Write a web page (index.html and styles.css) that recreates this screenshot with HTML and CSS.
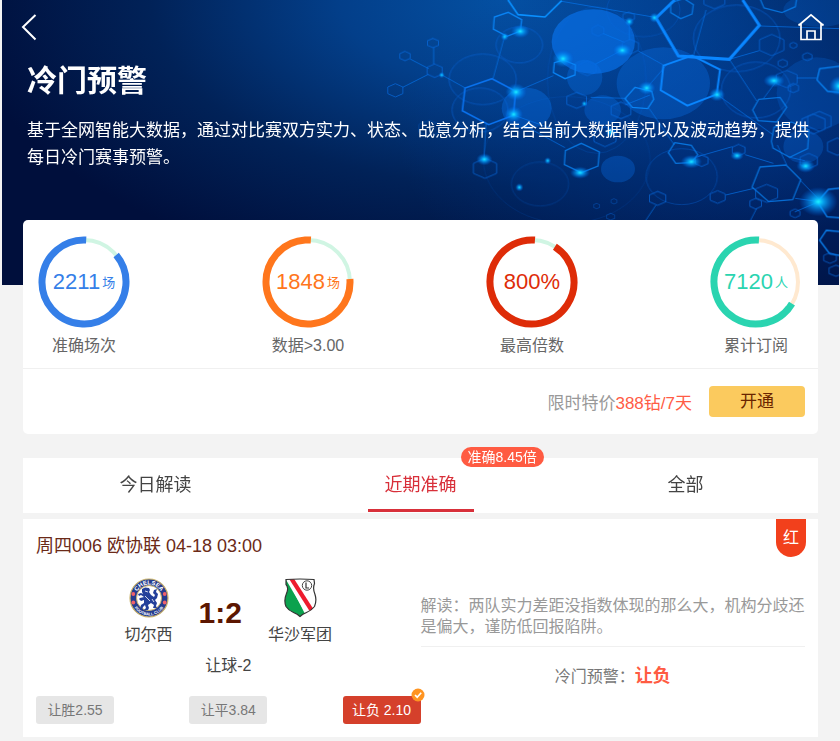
FILE: index.html
```
<!DOCTYPE html>
<html lang="zh-CN">
<head>
    <meta charset="UTF-8">
    <meta name="viewport" content="width=device-width, initial-scale=1.0">
    <title>冷门预警</title>
    <link rel="stylesheet" href="styles.css">
</head>
<body>

    <header class="hero">
        <!-- 背景:分子结构 -->
        <svg class="hero-bg" viewBox="0 0 1377 855" aria-hidden="true">
            <defs>
                <polygon id="hex" points="0,-1 .87,-.5 .87,.5 0,1 -.87,.5 -.87,-.5" vector-effect="non-scaling-stroke"/>
                <radialGradient id="glow">
                    <stop offset="0" stop-color="#1ff4ff"/>
                    <stop offset=".25" stop-color="#08b4ff" stop-opacity=".9"/>
                    <stop offset="1" stop-color="#0070ff" stop-opacity="0"/>
                </radialGradient>
            </defs>

            <!-- 光斑 -->
            <g fill="#0a78f5">
                <ellipse cx="640" cy="125" rx="125" ry="97" opacity=".6"/>
                <circle cx="614" cy="232" r="53" opacity=".3"/>
                <ellipse cx="850" cy="250" rx="140" ry="108" opacity=".3"/>
                <ellipse cx="440" cy="325" rx="75" ry="62" opacity=".35"/>
                <ellipse cx="668" cy="330" rx="55" ry="44" opacity=".3"/>
                <ellipse cx="714" cy="507" rx="51" ry="40" opacity=".3"/>
                <ellipse cx="1310" cy="280" rx="120" ry="108" opacity=".2"/>
                <ellipse cx="1320" cy="30" rx="110" ry="50" opacity=".2"/>
                <ellipse cx="1270" cy="440" rx="60" ry="50" opacity=".25"/>
            </g>
            <g fill="#0058c8" fill-opacity=".12" stroke="#0a6ae0" stroke-width="3" opacity=".55">
                <ellipse cx="308" cy="238" rx="101" ry="76"/>
                <ellipse cx="418" cy="135" rx="70" ry="54"/>
                <ellipse cx="300" cy="330" rx="84" ry="66"/>
                <ellipse cx="1070" cy="115" rx="130" ry="100"/>
                <ellipse cx="1128" cy="270" rx="104" ry="84"/>
                <ellipse cx="905" cy="530" rx="107" ry="84" opacity=".7"/>
                <ellipse cx="480" cy="552" rx="86" ry="66" opacity=".5"/>
                <ellipse cx="650" cy="240" rx="148" ry="220" opacity=".4"/>
                <ellipse cx="560" cy="480" rx="250" ry="190" opacity=".3"/>
                <ellipse cx="790" cy="30" rx="110" ry="80" opacity=".6"/>
            </g>

            <!-- 连线 -->
            <g fill="none" stroke="#0878f0" stroke-width="3" opacity=".65">
                <path d="M90 177l56 29M161 142v50M68 262l77-39M184 224l70 39M374 108l-35 128M408 275l112-48M318 370l-6 106M430 375l125 68"/>
                <path d="M545 4l280 48M748 65v55M668 100l65 27M645 193l80-42M775 153l75 42M800 264l60-70M735 315l75-30M632 292l108 3M400 345l155 55"/>
                <path d="M978 30l-38 138M1140 78l240 8M1048 178l90-26M1048 178l82 125M1010 283l170 122M1250 234h60M1190 242l-40 54M807 325l76 110M952 470l105-30"/>
                <path d="M1230 472l44 10M1220 495l-28-60M1260 540l58 60M1245 595l75 10M1037 585l85-20M828 615l-30 45M1130 625l-18 35M1314 606l-70 30M1180 490l-85-26"/>
            </g>
            <g fill="none" stroke="#0a84f5" stroke-width="4">
                <path d="M336 236l71 38-7 72-74 28-79-42 8-68z" stroke="#0a72ee" stroke-width="5"/>
                <path d="M384 0l30 44 81 7 50-49" stroke="#0a90ff" stroke-width="5"/>
                <path d="M884 0l-56 54 67 114 153 10 90-102L1088 0" stroke="#0a86ff" stroke-width="9"/>
                <path d="M936 167l84 42-10 74-88 34-80-46 8-74z" stroke="#0a86ff" stroke-width="6"/>
                <path d="M385 37l40 22-4 34-40 16-41-22 3-36z"/>
                <path d="M550 180l36 15-1 30-30 11-35-18 3-30zM765 262l50 12 6 24-18 28-46-4-22-26z"/>
                <path d="M604 430l54 26-4 42-50 20-51-24 3-42zM884 428l50 8 19 28-20 24-46 2-22-32z" opacity=".8"/>
                <path d="M1136 298l64-6 20 30-30 44-56-4-16-32zM1174 424l8-42 52-16 53 24-4 56-54 26-50-28zM1218 495l44 44-24 60-72 6-50-44 24-60z" opacity=".75"/>
                <path d="M1385 198l-66 8-8 34 32 34 42 4M1385 564l-40 4-32 38 28 44 44 4M1385 695l-46-4-20 30 30 40 36 6"/>
                <path d="M872 8l40-12 28 18-4 28-34 14-30-18zM1140 -4l12 28 54 14 40-18 4-24" opacity=".75"/>
            </g>
            <g fill="none" stroke="#0a6ce0" opacity=".7">
                <use href="#hex" transform="translate(75 168) scale(18 14)"/>
                <use href="#hex" transform="translate(159 129) scale(19 14)"/>
                <use href="#hex" transform="translate(164 212) scale(26 20)"/>
                <use href="#hex" transform="translate(46 271) scale(26 20)"/>
                <use href="#hex" transform="translate(654 92) scale(20 17)"/>
                <use href="#hex" transform="translate(622 205) scale(30 22)"/>
                <use href="#hex" transform="translate(590 301) scale(34 24)"/>
                <use href="#hex" transform="translate(751 140) scale(28 22)"/>
                <use href="#hex" transform="translate(746 50) scale(20 14)"/>
                <use href="#hex" transform="translate(723 331) scale(34 25)"/>
                <use href="#hex" transform="translate(675 410) scale(38 30)"/>
                <use href="#hex" transform="translate(315 505) scale(40 30)"/>
                <use href="#hex" transform="translate(148 385) scale(36 24)" opacity=".5"/>
                <use href="#hex" transform="translate(1175 135) scale(42 32)"/>
                <use href="#hex" transform="translate(1220 237) scale(36 26)"/>
                <use href="#hex" transform="translate(1003 0) scale(36 26)"/>
                <use href="#hex" transform="translate(965 482) scale(22 17)"/>
                <use href="#hex" transform="translate(1076 450) scale(22 17)"/>
                <use href="#hex" transform="translate(833 595) scale(28 21)"/>
                <use href="#hex" transform="translate(1013 591) scale(26 19)"/>
                <use href="#hex" transform="translate(1127 611) scale(20 16)"/>
                <use href="#hex" transform="translate(1160 580) scale(38 27)"/>
                <use href="#hex" transform="translate(1286 483) scale(30 23)"/>
                <use href="#hex" transform="translate(1318 364) scale(40 30)"/>
                <use href="#hex" transform="translate(1300 372) scale(40 30)"/>
                <use href="#hex" transform="translate(1240 264) scale(18 14)"/>
                <use href="#hex" transform="translate(1208 190) scale(16 12)"/>
                <use href="#hex" transform="translate(1282 170) scale(16 12)"/>
                <use href="#hex" transform="translate(1240 136) scale(12 9)"/>
                <use href="#hex" transform="translate(1245 640) scale(17 13)"/>
                <use href="#hex" transform="translate(1372 440) scale(34 26)"/>
                <use href="#hex" transform="translate(1350 774) scale(22 16)"/>
                <use href="#hex" transform="translate(1368 812) scale(24 17)"/>
                <use href="#hex" transform="translate(692 650) scale(14 10)" opacity=".5"/>
                <use href="#hex" transform="translate(702 604) scale(10 8)" opacity=".5"/>
                <use href="#hex" transform="translate(650 618) scale(10 8)" opacity=".5"/>
            </g>

            <!-- 发光点 -->
            <g fill="url(#glow)">
                <ellipse cx="421" cy="94" rx="28" ry="20"/>
                <circle cx="374" cy="110" r="12"/>
                <ellipse cx="408" cy="276" rx="32" ry="26"/>
                <ellipse cx="401" cy="343" rx="28" ry="24"/>
                <ellipse cx="549" cy="176" rx="32" ry="26"/>
                <ellipse cx="727" cy="151" rx="28" ry="20"/>
                <circle cx="748" cy="65" r="14"/>
                <circle cx="823" cy="53" r="15"/>
                <ellipse cx="800" cy="264" rx="26" ry="20"/>
                <ellipse cx="1011" cy="284" rx="24" ry="20"/>
                <ellipse cx="1182" cy="242" rx="32" ry="20"/>
                <circle cx="1377" cy="258" r="30"/>
                <ellipse cx="934" cy="485" rx="32" ry="20"/>
                <ellipse cx="1071" cy="467" rx="20" ry="14"/>
                <ellipse cx="1277" cy="498" rx="28" ry="20"/>
                <ellipse cx="1315" cy="605" rx="58" ry="44"/>
                <ellipse cx="600" cy="518" rx="30" ry="18"/>
                <ellipse cx="313" cy="478" rx="24" ry="18"/>
                <circle cx="692" cy="396" r="16"/>
                <circle cx="185" cy="225" r="9"/>
                <circle cx="613" cy="311" r="9"/>
                <circle cx="503" cy="482" r="10"/>
                <circle cx="418" cy="562" r="12"/>
            </g>
        </svg>

        <nav class="hero-nav">
            <a href="#" aria-label="返回">
                <svg width="16" height="28" viewBox="0 0 16 28" fill="none" stroke="#fff" stroke-width="2">
                    <path d="M14.500 2L2 14l12.500 12.500"/>
                </svg>
            </a>
            <a href="#" aria-label="首页">
                <svg width="28" height="28" viewBox="0 0 28 28" fill="none" stroke="#fff" stroke-width="1.700">
                    <path d="M1.500 12.500L14 1.800l12.500 10.700M4 11.500H1.500M24 11.500h2.500M4 10.500V26.500h20V10.500M10 26V18h8v8"/>
                </svg>
            </a>
        </nav>
        <div class="hero-text">
            <h1>冷门预警</h1>
            <p>基于全网智能大数据，通过对比赛双方实力、状态、战意分析，结合当前大数据情况以及波动趋势，提供每日冷门赛事预警。</p>
        </div>
    </header>

    <main class="content">
        <section class="summary">
            <ul class="stats">
                <li class="stat blue">
                    <div class="ring">
                        <svg viewBox="0 0 92 92" aria-hidden="true">
                            <circle class="track" cx="46" cy="46" r="42"/>
                            <circle class="bar" cx="46" cy="46" r="42" pathLength="360" stroke-dasharray="313 360" transform="rotate(-40 46 46)"/>
                        </svg>
                        <span class="num">2211<small>场</small></span>
                    </div>
                    <span class="name">准确场次</span>
                </li>
                <li class="stat orange">
                    <div class="ring">
                        <svg viewBox="0 0 92 92" aria-hidden="true">
                            <circle class="track" cx="46" cy="46" r="42"/>
                            <circle class="bar" cx="46" cy="46" r="42" pathLength="360" stroke-dasharray="278 360" transform="rotate(-4 46 46)"/>
                        </svg>
                        <span class="num">1848<small>场</small></span>
                    </div>
                    <span class="name">数据&gt;3.00</span>
                </li>
                <li class="stat red">
                    <div class="ring">
                        <svg viewBox="0 0 92 92" aria-hidden="true">
                            <circle class="track" cx="46" cy="46" r="42"/>
                            <circle class="bar" cx="46" cy="46" r="42" pathLength="360" stroke-dasharray="331 360" transform="rotate(-57 46 46)"/>
                        </svg>
                        <span class="num">800%</span>
                    </div>
                    <span class="name">最高倍数</span>
                </li>
                <li class="stat green">
                    <div class="ring">
                        <svg viewBox="0 0 92 92" aria-hidden="true">
                            <circle class="track" cx="46" cy="46" r="42"/>
                            <circle class="bar" cx="46" cy="46" r="42" pathLength="360" stroke-dasharray="243 360" transform="rotate(31 46 46)"/>
                        </svg>
                        <span class="num">7120<small>人</small></span>
                    </div>
                    <span class="name">累计订阅</span>
                </li>
            </ul>
            <div class="buy">
                <p>限时特价<em>388钻/7天</em></p>
                <button type="button">开通</button>
            </div>
        </section>

        <nav class="tabs">
            <a href="#">今日解读</a>
            <a href="#" class="active">近期准确<span class="tip">准确8.45倍</span></a>
            <a href="#">全部</a>
        </nav>

        <article class="match">
            <span class="flag">红</span>
            <h2>周四006 欧协联 04-18 03:00</h2>
            <div class="match-body">
                <div class="game">
                    <div class="teams">
                        <div class="team">
                            <svg width="40" height="40" viewBox="0 0 40 40" aria-hidden="true">
                                <defs>
                                    <path id="arc-top" d="M6.500 20a13.500 13.500 0 0 1 27 0"/>
                                    <path id="arc-bottom" d="M2.500 20a17.500 17.500 0 0 0 35 0"/>
                                </defs>
                                <circle cx="20" cy="20" r="19" fill="#253c8e" stroke="#c9b26a" stroke-width="1.200"/>
                                <circle cx="20" cy="20" r="12.500" fill="#fff" stroke="#c9b26a"/>
                                <text class="crest-text"><textPath href="#arc-top" startOffset="50%">CHELSEA</textPath></text>
                                <text class="crest-text small"><textPath href="#arc-bottom" startOffset="50%">FOOTBALL CLUB</textPath></text>
                                <g fill="#f0606a">
                                    <circle cx="4.300" cy="16" r="1.900"/>
                                    <circle cx="4.300" cy="24.500" r="1.900"/>
                                    <circle cx="35.700" cy="16" r="1.900"/>
                                    <circle cx="35.700" cy="24.500" r="1.900"/>
                                </g>
                                <path fill="#24409a" d="M13 11l3-1.500 4 .5 1 2-1 2 2 3 3 2 1-2-2-2 1-3 3-1-1 3 2 2-1 4-2 2 2 3-1 3 1 2h-4l1-3-3-2-3 2 1 3-1 2h-4l2-2-1-3-2 2-1 3-2-1 1-4 3-2v-3l-3 1-2-2 1-1 4-1-3-2-2 1-1-2 3-1 2 1-1-2z"/>
                                <path stroke="#fff" stroke-width=".8" fill="none" d="M16 13l3 1M16 18l5 5M23 21l2 3"/>
                            </svg>
                            <span>切尔西</span>
                        </div>
                        <strong class="score">1:2</strong>
                        <div class="team">
                            <svg width="40" height="40" viewBox="0 0 40 40" aria-hidden="true">
                                <clipPath id="shield">
                                    <path d="M6 1.500q14-1 28 0l.5 4q-2 5 .5 11 2 6-.5 12-3 4-8 6-4 1.500-6.500 4-2.500-2.500-6.500-4-5-2-7.500-6-2.500-6 .5-13 2.500-6-.5-9z"/>
                                </clipPath>
                                <g clip-path="url(#shield)">
                                    <rect width="40" height="40" fill="#fff"/>
                                    <path d="M0 0h7l20 40H0z" fill="#0ba24e"/>
                                    <path d="M5 0h4l22 36h-5z" fill="#fff"/>
                                    <path d="M8.500 0h5L34 32l-3.500 2.500z" fill="#ee1c2e"/>
                                </g>
                                <path d="M6 1.500q14-1 28 0l.5 4q-2 5 .5 11 2 6-.5 12-3 4-8 6-4 1.500-6.500 4-2.500-2.500-6.500-4-5-2-7.500-6-2.500-6 .5-13 2.500-6-.5-9z" fill="none" stroke="#333" stroke-width="1.200"/>
                                <circle cx="27" cy="7.500" r="4.700" fill="#fff" stroke="#444"/>
                                <path d="M26 4.500v5.500h3" fill="none" stroke="#333" stroke-width="1.200"/>
                            </svg>
                            <span>华沙军团</span>
                        </div>
                    </div>
                    <p class="handicap">让球-2</p>
                    <div class="odds">
                        <span>让胜2.55</span>
                        <span>让平3.84</span>
                        <span class="hit">让负 2.10
                            <svg class="check" width="14" height="14" viewBox="0 0 14 14" aria-hidden="true">
                                <circle cx="7" cy="7" r="6.500" fill="#ff9420"/>
                                <path d="M4 7l2.200 2.200L10.200 4.800" fill="none" stroke="#fff" stroke-width="1.700"/>
                            </svg>
                        </span>
                    </div>
                </div>
                <div class="analysis">
                    <p class="reading">解读：两队实力差距没指数体现的那么大，机构分歧还是偏大，谨防低回报陷阱。</p>
                    <p class="result">冷门预警：<b>让负</b></p>
                </div>
            </div>
        </article>
    </main>

</body>
</html>
```
FILE: styles.css
```
* {
    box-sizing: border-box;
}

body {
    margin: 0;
    font-family: "Liberation Sans", "Noto Sans CJK SC", sans-serif;
    font-size: 16px;
    color: #444;
    background-color: #f3f3f3;
}

h1, h2, p, ul {
    margin: 0;
    padding: 0;
}

a {
    color: inherit;
    text-decoration: none;
}

/* 顶部 */
.hero {
    position: relative;
    overflow: hidden;
    margin: 0 1px 0 2px;
    padding: 13px 14px 114px 19px;
    color: #fff;
    background:
        radial-gradient(ellipse 45% 75% at 92% 45%, rgba(0, 72, 180, 0.45), rgba(0, 72, 180, 0)),
        radial-gradient(ellipse 65% 100% at 60% 0, #0450a2 0%, #033f8a 30%, #012258 65%, rgba(0, 14, 58, 0) 100%),
        #000f3c;
}

.hero-bg {
    position: absolute;
    top: 0;
    right: 0;
    width: 459px;
    height: 285px;
}

.hero-nav {
    position: relative;
    display: flex;
    justify-content: space-between;
}

.hero-nav a,
.hero-nav svg {
    display: block;
}

.hero-text {
    position: relative;
    padding: 18px 8px 0 6px;
}

.hero h1 {
    font-size: 30px;
    line-height: 44px;
}

.hero p {
    margin-top: 14px;
    font-size: 17px;
    line-height: 27px;
}

.content {
    position: relative;
    margin: -65px 22px 0 23px;
}

/* 统计 */
.summary {
    background: #fff;
    border-radius: 5px;
}

.stats {
    display: flex;
    justify-content: space-between;
    padding: 16px 16px 10px 15px;
    list-style: none;
    border-bottom: 1px solid #f0f0f0;
}

.stat {
    display: flex;
    flex-direction: column;
    align-items: center;
    width: 92px;
}

.ring {
    display: grid;
    place-items: center;
    width: 92px;
    height: 92px;
}

.ring svg,
.ring .num {
    grid-area: 1 / 1;
}

.ring circle {
    fill: none;
}

.track {
    stroke: #d0f5e3;
    stroke-width: 4;
}

.bar {
    stroke: currentColor;
    stroke-width: 7;
}

.num {
    font-size: 22px;
    line-height: 26px;
}

.num small {
    margin-left: 2px;
    font-size: 13px;
    vertical-align: 2px;
}

.name {
    margin-top: 6px;
    line-height: 24px;
    color: #666;
}

.blue { color: #357fe8; }
.orange { color: #ff761c; }
.red { color: #de2c08; }
.green { color: #2ad4b0; }

.green .track {
    stroke: #ffe9d0;
}

.buy {
    display: flex;
    justify-content: flex-end;
    align-items: center;
    gap: 17px;
    padding: 17px 13px;
    font-size: 17px;
    color: #999;
}

.buy em {
    font-style: normal;
    color: #ff5c45;
}

.buy button {
    width: 96px;
    height: 31px;
    padding: 0;
    border: none;
    border-radius: 4px;
    font: inherit;
    line-height: 32px;
    color: #6a2400;
    background: #fbca5e;
    cursor: pointer;
}

/* 标签页 */
.tabs {
    display: flex;
    margin-top: 24px;
    background: #fff;
}

.tabs a {
    position: relative;
    display: flex;
    flex: 1;
    flex-direction: column;
    align-items: center;
    font-size: 18px;
    line-height: 55px;
}

.tabs .active {
    color: #d8303a;
}

.tabs .active::after {
    content: "";
    width: 106px;
    height: 3px;
    margin-top: -4px;
    background: #d8303a;
}

.tip {
    position: absolute;
    top: -11px;
    left: calc(50% + 40px);
    padding: 0 7px;
    border-radius: 10px;
    font-size: 14px;
    line-height: 20px;
    white-space: nowrap;
    color: #fff;
    background: #ff5b42;
}

/* 比赛 */
.match {
    position: relative;
    margin-top: 6px;
    padding: 14px 13px 13px;
    background: #fff;
}

.match h2 {
    font-size: 18px;
    font-weight: normal;
    line-height: 26px;
    color: #6b2a18;
}

.flag {
    position: absolute;
    top: 0;
    right: 12px;
    width: 30px;
    height: 38px;
    border-radius: 0 0 15px 15px;
    line-height: 38px;
    text-align: center;
    color: #fff;
    background: #f2401c;
}

.match-body {
    display: flex;
}

.game,
.analysis {
    flex: 1;
}

.teams {
    display: flex;
    justify-content: center;
    align-items: center;
    gap: 26px;
    padding-top: 19px;
}

.team {
    display: flex;
    flex-direction: column;
    align-items: center;
    line-height: 24px;
    gap: 5px;
}

.score {
    font-size: 30px;
    color: #5c1600;
}

.handicap {
    margin-top: 7px;
    line-height: 24px;
    text-align: center;
}

.odds {
    display: flex;
    justify-content: space-between;
    margin-top: 18px;
}

.odds span {
    position: relative;
    width: 78px;
    border-radius: 3px;
    font-size: 14px;
    line-height: 28px;
    text-align: center;
    color: #777;
    background: #e6e6e6;
}

.odds .hit {
    color: #fff;
    background: #d5402b;
}

.check {
    position: absolute;
    top: -8px;
    right: -4px;
}

.reading {
    padding: 36px 0 9px;
    line-height: 21px;
    color: #999;
    border-bottom: 1px solid #f0f0f0;
}

.result {
    margin-top: 16px;
    line-height: 26px;
    text-align: center;
    color: #777;
}

.result b {
    font-size: 18px;
    color: #ff5b42;
}

.crest-text {
    font-size: 6px;
    font-weight: bold;
    text-anchor: middle;
    fill: #fff;
}

.crest-text.small {
    font-size: 4px;
}
```
